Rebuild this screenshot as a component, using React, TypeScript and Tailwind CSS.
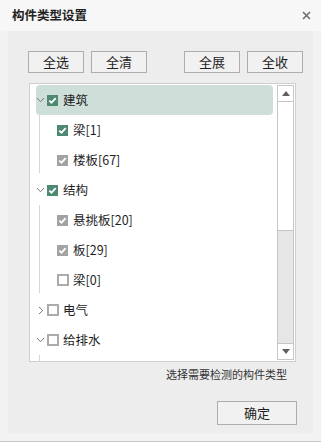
import React from "react";

const font = { fontFamily: '"Noto Sans CJK SC", "Noto Sans", sans-serif' };

type CbState = "green" | "grey" | "empty";

function Check({ state }: { state: CbState }) {
  if (state === "empty") {
    return <div className="w-[12px] h-[12px] border-2 border-[#ababab] bg-white shrink-0 -mr-[1px]" />;
  }
  const bg = state === "green" ? "bg-[#4e8a72]" : "bg-[#a3a3a3]";
  return (
    <div className={`w-[11px] h-[11px] ${bg} shrink-0 flex items-center justify-center`}>
      <svg width="9" height="9" viewBox="0 0 9 9">
        <path d="M1.3 4.6 L3.5 6.7 L7.7 2.2" fill="none" stroke="white" strokeWidth="1.8" />
      </svg>
    </div>
  );
}

function Chevron({ open }: { open: boolean }) {
  return (
    <div className="w-[9px] h-[9px] flex items-center justify-center shrink-0">
      {open ? (
        <svg width="9" height="6" viewBox="0 0 9 6">
          <path d="M1 1 L4.5 4.8 L8 1" fill="none" stroke="#7a7a7a" strokeWidth="1" />
        </svg>
      ) : (
        <svg width="6" height="9" viewBox="0 0 6 9">
          <path d="M1 1 L4.8 4.5 L1 8" fill="none" stroke="#7a7a7a" strokeWidth="1" />
        </svg>
      )}
    </div>
  );
}

function TopRow({ label, state, open, selected }: { label: string; state: CbState; open: boolean; selected?: boolean }) {
  return (
    <div className={`h-[30px] flex items-center rounded-[4px] ${selected ? "bg-[#cddfd8]" : ""}`}>
      <Chevron open={open} />
      <div className="w-[2px]" />
      <Check state={state} />
      <span className="ml-[5px] text-[12.5px] text-[#1e1e1e] leading-none">{label}</span>
    </div>
  );
}

function ChildRow({ label, state }: { label: string; state: CbState }) {
  return (
    <div className="h-[30px] flex items-center pl-[17px]">
      <Check state={state} />
      <span className="ml-[5px] text-[12.5px] text-[#1e1e1e] leading-none">{label}</span>
    </div>
  );
}

function Group({ children }: { children: React.ReactNode }) {
  return (
    <div className="ml-[3px] flex">
      <div className="w-px bg-[#d6d6d6] mb-[2px]" />
      <div className="flex-1 flex flex-col">{children}</div>
    </div>
  );
}

function Btn({ label, w = "w-[56px]", h = "h-[22px]" }: { label: string; w?: string; h?: string }) {
  return (
    <div className={`${w} ${h} border border-[#adadad] bg-[#f1f1f1] flex items-center justify-center text-[13px] text-[#1e1e1e]`}>
      {label}
    </div>
  );
}

export default function App() {
  return (
    <div style={font} className="w-[321px] h-[442px] bg-[#f2f2f2] border-b border-[#c9c9c9] flex flex-col overflow-hidden">
      <div className="h-[31px] shrink-0 bg-[#f7f7f7] flex items-center justify-between pl-[12px] pr-[10px]">
        <span className="text-[12.5px] font-bold text-[#222]">构件类型设置</span>
        <svg width="9" height="9" viewBox="0 0 9 9">
          <path d="M1 1 L8 8 M8 1 L1 8" stroke="#707070" strokeWidth="1.6" />
        </svg>
      </div>
      <div className="flex-1 px-[8px] pb-[8px] flex">
        <div className="flex-1 bg-[#ededed] flex flex-col pl-[20px] pr-[10px] pt-[20px]">
          <div className="flex items-center">
            <Btn label="全选" />
            <div className="w-[7px]" />
            <Btn label="全清" />
            <div className="w-[37px]" />
            <Btn label="全展" />
            <div className="w-[7px]" />
            <Btn label="全收" />
          </div>
          <div className="mt-[10px] ml-[1px] w-[267px] h-[279px] bg-white border border-[#cfcfcf] flex overflow-hidden">
            <div className="flex-1 pl-[6px] pr-[4px] pt-[1px] overflow-hidden">
              <TopRow label="建筑" state="green" open selected />
              <Group>
                <ChildRow label="梁[1]" state="green" />
                <ChildRow label="楼板[67]" state="grey" />
              </Group>
              <TopRow label="结构" state="green" open />
              <Group>
                <ChildRow label="悬挑板[20]" state="grey" />
                <ChildRow label="板[29]" state="grey" />
                <ChildRow label="梁[0]" state="empty" />
              </Group>
              <TopRow label="电气" state="empty" open={false} />
              <TopRow label="给排水" state="empty" open />
              <div className="ml-[3px] w-px h-[12px] bg-[#d6d6d6]" />
            </div>
            <div className="w-[18px] shrink-0 py-[1px] pr-[1px] flex flex-col">
              <div className="flex-1 border border-[#c6c6c6] flex flex-col bg-[#e6e6e6]">
                <div className="h-[16px] bg-white border-b border-[#c6c6c6] flex items-center justify-center">
                  <svg width="8" height="5" viewBox="0 0 8 5"><path d="M0 5 L4 0 L8 5 Z" fill="#606060" /></svg>
                </div>
                <div className="h-[129px] bg-white border-b border-[#c6c6c6]" />
                <div className="flex-1" />
                <div className="h-[16px] bg-white border-t border-[#c6c6c6] flex items-center justify-center">
                  <svg width="8" height="5" viewBox="0 0 8 5"><path d="M0 0 L8 0 L4 5 Z" fill="#606060" /></svg>
                </div>
              </div>
            </div>
          </div>
          <div className="mt-[7px] w-[259px] text-right text-[11px] text-[#333] leading-none">选择需要检测的构件类型</div>
          <div className="flex justify-end mt-[21px] mr-[6px]">
            <Btn label="确定" w="w-[80px]" h="h-[24px]" />
          </div>
        </div>
      </div>
    </div>
  );
}
